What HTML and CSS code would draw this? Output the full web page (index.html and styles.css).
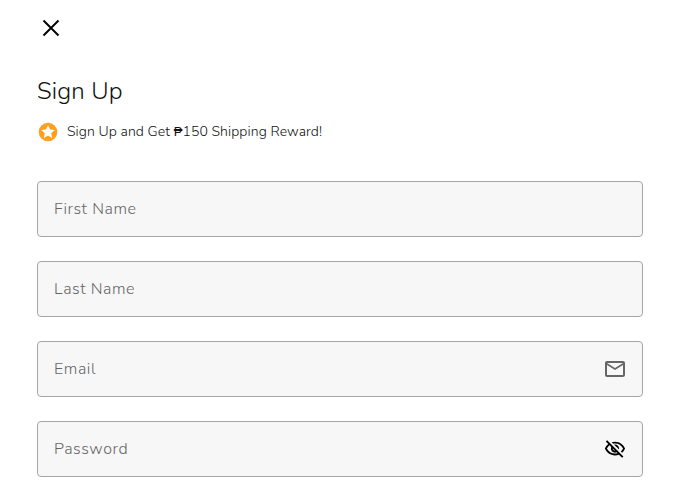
FILE: index.html
```html
<!DOCTYPE html>
<html lang="en">
<head>
    <meta charset="UTF-8">
    <title>Sign Up</title>
    <link rel="stylesheet" href="styles.css">
</head>
<body>
    <button class="close" type="button" aria-label="Close">
        <svg width="18" height="18" viewBox="0 0 18 18"><path d="M1.5 1.5l15 15M16.5 1.5l-15 15"/></svg>
    </button>
    <h1>Sign Up</h1>
    <div class="reward">
        <svg width="20" height="20" viewBox="0 0 20 20">
            <circle cx="10" cy="10" r="9.3" fill="#ff9f20"/>
            <path fill="#fff" d="M10 3.2l2 4.3 4.7.5-3.5 3.2 1 4.7L10 13.5l-4.2 2.4 1-4.7L3.300 8l4.7-.5z"/>
        </svg>
        <span>Sign Up and Get <span class="peso">₱</span>150 Shipping Reward!</span>
    </div>
    <form>
        <div class="field">
            <input class="first-name" type="text" placeholder="First Name" aria-label="First Name">
        </div>
        <div class="field">
            <input class="last-name" type="text" placeholder="Last Name" aria-label="Last Name">
        </div>
        <div class="field">
            <input class="email" type="email" placeholder="Email" aria-label="Email">
            <svg class="mail" width="24" height="24" viewBox="0 0 24 24"><path d="M22 6c0-1.1-.9-2-2-2H4c-1.1 0-2 .9-2 2v12c0 1.1.9 2 2 2h16c1.1 0 2-.9 2-2V6zm-2 0l-8 5-8-5h16zm0 12H4V8l8 5 8-5v10z"/></svg>
        </div>
        <div class="field">
            <input class="password" type="password" placeholder="Password" aria-label="Password">
            <svg class="eye" width="22" height="22" viewBox="0 0 24 24"><path d="M12 6c3.79 0 7.17 2.13 8.82 5.5-.59 1.22-1.42 2.27-2.41 3.12l1.41 1.41c1.39-1.23 2.49-2.77 3.18-4.53C21.27 7.11 17 4 12 4c-1.27 0-2.49.2-3.64.57l1.65 1.65C10.66 6.09 11.32 6 12 6zm-1.07 1.14L13 9.21c.57.25 1.03.71 1.28 1.28l2.07 2.07c.08-.34.14-.7.14-1.07C16.5 9.01 14.48 7 12 7c-.37 0-.72.05-1.07.14zM2.01 3.87l2.68 2.68C3.06 7.83 1.77 9.53 1 11.5 2.73 15.89 7 19 12 19c1.52 0 2.98-.29 4.32-.82l3.42 3.42 1.41-1.41L3.42 2.45 2.01 3.87zm7.5 7.5l2.61 2.61c-.04.01-.08.02-.12.02-1.38 0-2.5-1.12-2.5-2.5 0-.05.01-.08.01-.13zm-3.4-3.4l1.75 1.75c-.23.55-.36 1.15-.36 1.78 0 2.48 2.02 4.5 4.5 4.5.63 0 1.23-.13 1.77-.36l.98.98c-.88.24-1.8.38-2.75.38-3.79 0-7.17-2.13-8.82-5.5.7-1.43 1.72-2.61 2.93-3.53z"/></svg>
        </div>
    </form>
</body>
</html>
```

FILE: styles.css
```css
* { box-sizing: border-box; }
body {
    margin: 0;
    padding: 19px 40px 12px 37px;
    background: #fff;
    color: #111;
    font-family: Nunito, Lato, sans-serif;
}
.close {
    display: block;
    margin-left: 5px;
    padding: 0;
    border: 0;
    background: none;
    line-height: 0;
}
.close path {
    fill: none;
    stroke: #000;
    stroke-width: 1.9;
}
h1 {
    margin: 38px 0 0;
    font-size: 24px;
    font-weight: 320;
    line-height: 32px;
    letter-spacing: 0.2px;
}
.reward {
    display: flex;
    align-items: center;
    gap: 9px;
    height: 20px;
    margin: 15px 0 39px 1px;
    font-size: 14px;
    font-weight: 330;
    line-height: 18px;
    letter-spacing: 0.09px;
}
.peso {
    font-family: "Liberation Sans", sans-serif;
    font-size: 13px;
    line-height: 1;
}
.reward > span { padding-bottom: 1px; }
form {
    display: grid;
    gap: 24px;
}
.field {
    display: flex;
    align-items: center;
    height: 56px;
    padding: 0 15px 0 16px;
    border: 1px solid #a6a6a6;
    border-radius: 4px;
    background: #f7f7f7;
}
.field input {
    flex: 1;
    min-width: 0;
    padding: 0;
    border: 0;
    outline: 0;
    background: none;
    font: 300 16px/24px Nunito, Lato, sans-serif;
    letter-spacing: 0.57px;
}
.field input::placeholder {
    color: #666;
    opacity: 1;
}
.mail { fill: #666; }
.eye {
    margin-right: 1px;
    fill: #000;
}
```
